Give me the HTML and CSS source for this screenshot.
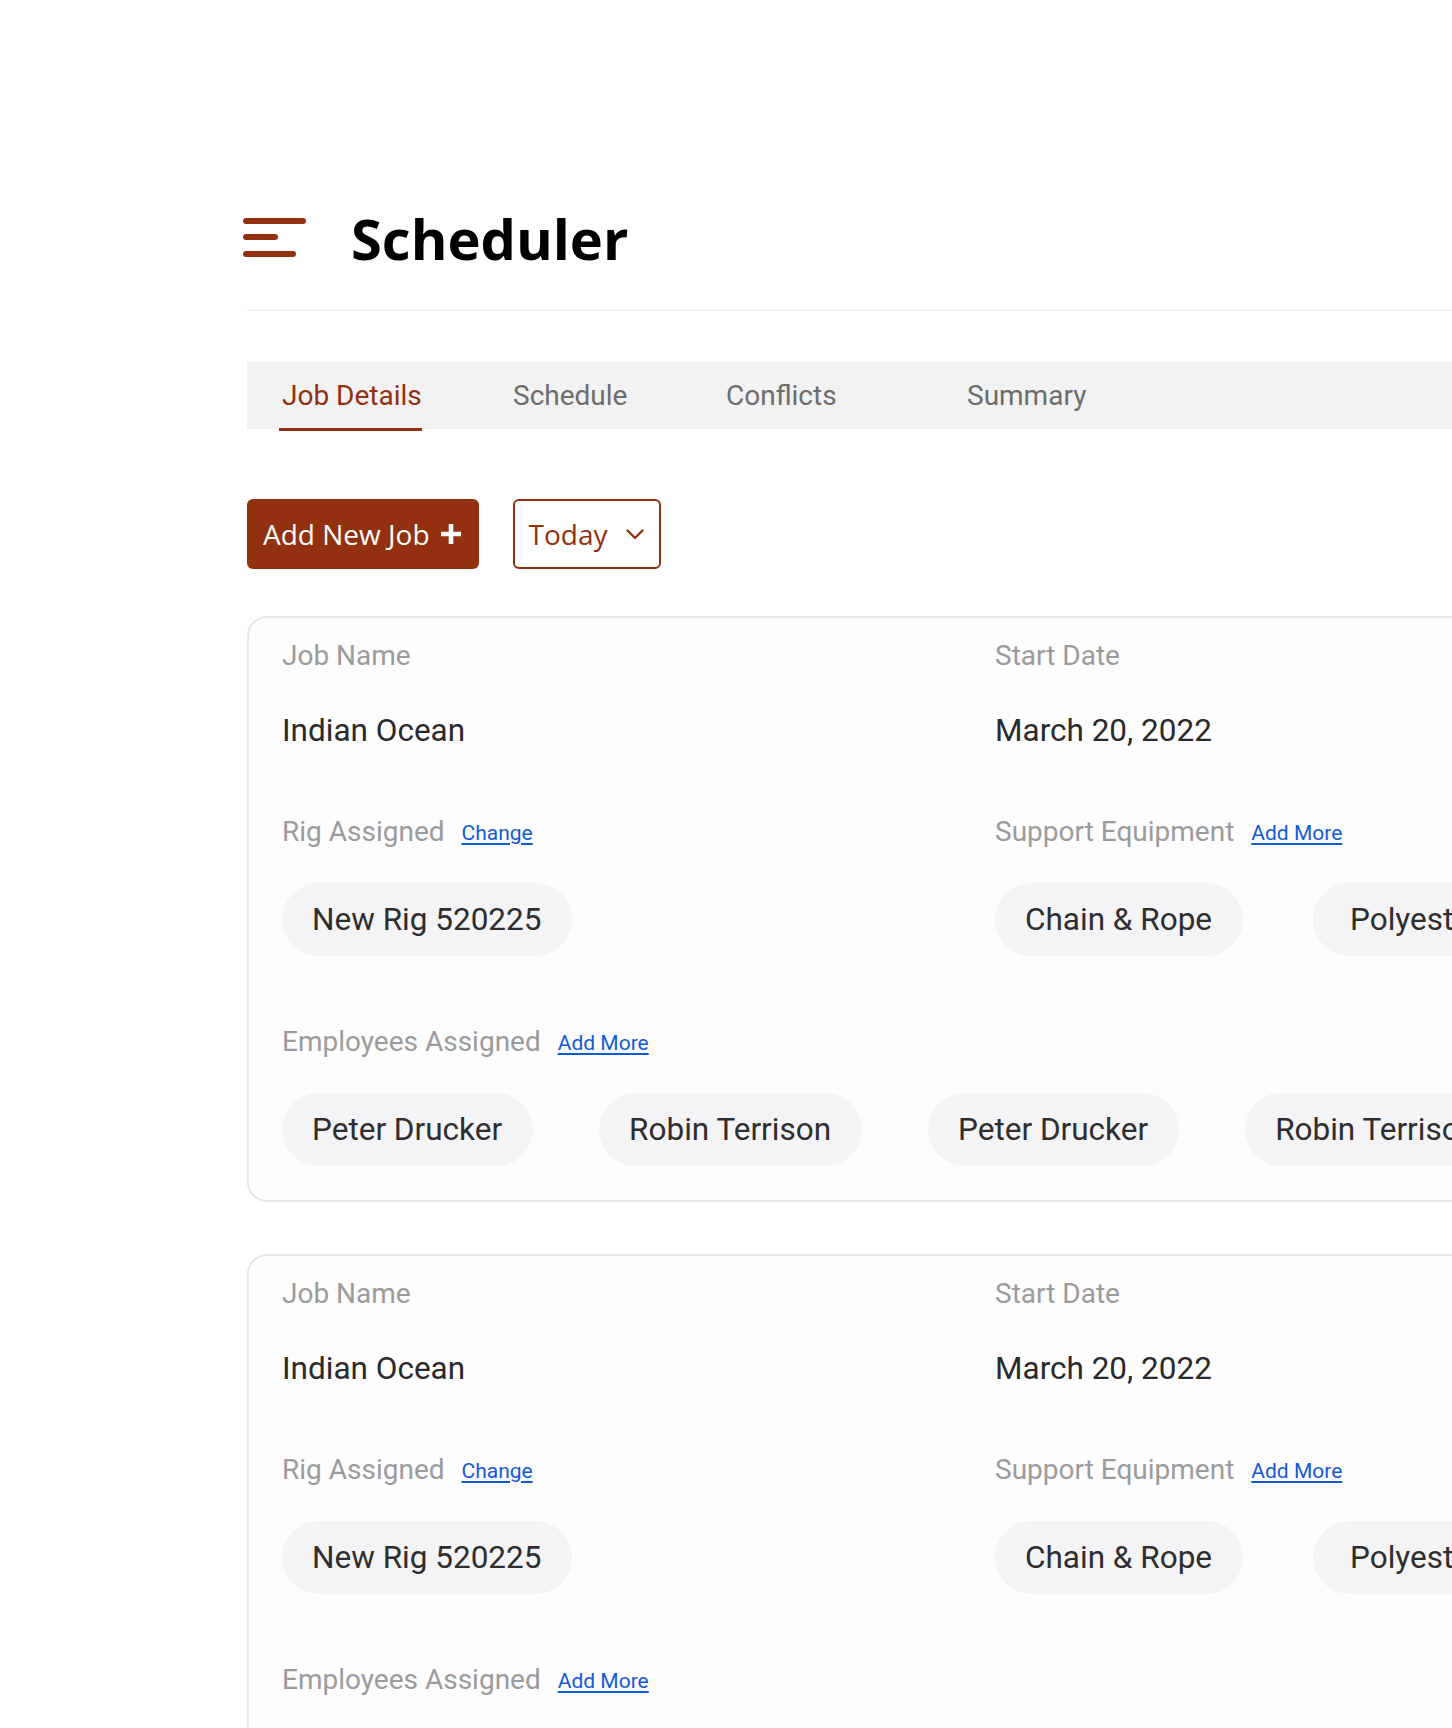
FILE: index.html
```html
<!DOCTYPE html>
<html lang="en">
<head>
<meta charset="utf-8">
<title>Scheduler</title>
<link rel="stylesheet" href="styles.css">
</head>
<body>
<div class="page">
  <header class="header">
    <svg class="menu" width="64" height="40" viewBox="0 0 64 40" aria-hidden="true">
      <g stroke="#93300f" stroke-width="6" stroke-linecap="round">
        <line x1="3" y1="3" x2="60" y2="3"/>
        <line x1="3" y1="19" x2="32" y2="19"/>
        <line x1="3" y1="36" x2="50" y2="36"/>
      </g>
    </svg>
    <h1 class="title">Scheduler</h1>
  </header>

  <nav class="tabs">
    <div class="tab tab-job active"><span class="tab-label">Job Details</span></div>
    <div class="tab tab-sched"><span class="tab-label">Schedule</span></div>
    <div class="tab tab-conf"><span class="tab-label">Conflicts</span></div>
    <div class="tab tab-sum"><span class="tab-label">Summary</span></div>
  </nav>

  <div class="actions">
    <button class="btn btn-primary">Add New Job
      <svg width="20" height="20" viewBox="0 0 20 20" aria-hidden="true"><path d="M10 0V20M0 10H20" stroke="#fff" stroke-width="4.6"/></svg>
    </button>
    <button class="btn btn-outline">Today
      <svg width="18" height="11" viewBox="0 0 18 11" aria-hidden="true"><path d="M1.5 1.5L9 9L16.5 1.5" fill="none" stroke="#93300f" stroke-width="2.4" stroke-linecap="round" stroke-linejoin="round"/></svg>
    </button>
  </div>

  <section class="card">
    <div class="row two">
      <div class="field">
        <div class="label">Job Name</div>
        <div class="value">Indian Ocean</div>
      </div>
      <div class="field">
        <div class="label">Start Date</div>
        <div class="value">March 20, 2022</div>
      </div>
    </div>
    <div class="row two spaced">
      <div class="field">
        <div class="label">Rig Assigned <a class="link" href="#">Change</a></div>
        <div class="chips">
          <span class="chip">New Rig 520225</span>
        </div>
      </div>
      <div class="field">
        <div class="label">Support Equipment <a class="link" href="#">Add More</a></div>
        <div class="chips chips-equip">
          <span class="chip">Chain &amp; Rope</span>
          <span class="chip chip-wide">Polyester Rope</span>
        </div>
      </div>
    </div>
    <div class="row spaced">
      <div class="field">
        <div class="label">Employees Assigned <a class="link" href="#">Add More</a></div>
        <div class="chips chips-emp">
          <span class="chip">Peter Drucker</span>
          <span class="chip">Robin Terrison</span>
          <span class="chip">Peter Drucker</span>
          <span class="chip">Robin Terrison</span>
        </div>
      </div>
    </div>
  </section>

  <section class="card">
    <div class="row two">
      <div class="field">
        <div class="label">Job Name</div>
        <div class="value">Indian Ocean</div>
      </div>
      <div class="field">
        <div class="label">Start Date</div>
        <div class="value">March 20, 2022</div>
      </div>
    </div>
    <div class="row two spaced">
      <div class="field">
        <div class="label">Rig Assigned <a class="link" href="#">Change</a></div>
        <div class="chips">
          <span class="chip">New Rig 520225</span>
        </div>
      </div>
      <div class="field">
        <div class="label">Support Equipment <a class="link" href="#">Add More</a></div>
        <div class="chips chips-equip">
          <span class="chip">Chain &amp; Rope</span>
          <span class="chip chip-wide">Polyester Rope</span>
        </div>
      </div>
    </div>
    <div class="row spaced">
      <div class="field">
        <div class="label">Employees Assigned <a class="link" href="#">Add More</a></div>
        <div class="chips chips-emp">
          <span class="chip">Peter Drucker</span>
          <span class="chip">Robin Terrison</span>
          <span class="chip">Peter Drucker</span>
          <span class="chip">Robin Terrison</span>
        </div>
      </div>
    </div>
  </section>
</div>
</body>
</html>
```

FILE: styles.css
```css
html, body {
  margin: 0;
  padding: 0;
  background: #ffffff;
  overflow: hidden;
}

body {
  font-family: Roboto, "Liberation Sans", sans-serif;
  color: #2b2b2b;
}

.page {
  padding-left: 247px;
  width: 1500px;
}

.header {
  margin-top: 208px;
  height: 60px;
  padding-bottom: 41px;
  border-bottom: 2px solid #f0f0f0;
  display: flex;
  align-items: center;
  gap: 44px;
}

.menu {
  margin-left: -4px;
  display: block;
}

.title {
  margin: 0;
  font-family: "Open Sans", "Noto Sans", sans-serif;
  font-weight: 700;
  font-size: 56px;
  line-height: 60px;
  color: #000;
}

.tabs {
  margin-top: 51px;
  height: 67px;
  background: #f2f2f2;
  display: flex;
  padding-left: 32px;
}

.tab {
  display: flex;
  align-items: stretch;
  font-size: 28px;
  color: #6d6d6d;
}

.tab-job { width: 231px; }
.tab-sched { width: 213px; }
.tab-conf { width: 241px; }

.tab-label {
  position: relative;
  display: flex;
  align-items: center;
  padding-left: 3px;
}

.tab.active { color: #93300f; }

.tab.active .tab-label::after {
  content: "";
  position: absolute;
  left: 0;
  right: 0;
  bottom: -2px;
  height: 3px;
  background: #93300f;
}

.actions {
  margin-top: 70px;
  display: flex;
  gap: 34px;
}

.btn {
  height: 70px;
  display: flex;
  align-items: center;
  font-family: "Open Sans", "Noto Sans", sans-serif;
  font-size: 28px;
  border-radius: 6px;
  cursor: pointer;
  box-sizing: border-box;
}

.btn svg { display: block; }

.btn-primary {
  background: #93300f;
  color: #ffffff;
  border: 0;
  padding: 0 18px 0 16px;
  gap: 11px;
}

.btn-outline {
  background: #ffffff;
  color: #93300f;
  border: 2px solid #93300f;
  padding: 0 15px 0 14px;
  gap: 18px;
}

.card {
  margin-top: 47px;
  border: 2px solid #e7e7e7;
  border-radius: 20px;
  background: #fdfdfe;
  padding: 22px 0 34px 33px;
}

.card + .card {
  margin-top: 52px;
}

.row.two {
  display: grid;
  grid-template-columns: 713px 1fr;
}

.row.spaced {
  margin-top: 67px;
}

.row.spaced + .row.spaced {
  margin-top: 70px;
}

.label {
  display: flex;
  align-items: baseline;
  gap: 17px;
  font-size: 28px;
  line-height: 32px;
  color: #9b9b9b;
  white-space: nowrap;
}

.link {
  font-size: 21px;
  color: #1459d4;
  text-decoration: underline;
  text-underline-offset: 3px;
  position: relative;
  top: -1px;
}

.value {
  margin-top: 41px;
  font-size: 31.5px;
  line-height: 36px;
  color: #2a2a2a;
}

.chips {
  margin-top: 33px;
  display: flex;
  flex-wrap: nowrap;
}

.chips-equip { gap: 70px; }
.chips-emp { gap: 66px; }

.chip {
  height: 73px;
  padding: 0 31px 0 30px;
  border-radius: 37px;
  background: #f4f3f5;
  display: flex;
  align-items: center;
  font-size: 31.5px;
  color: #2e2e2e;
  white-space: nowrap;
}

.chip-wide {
  padding-left: 37px;
}
```
